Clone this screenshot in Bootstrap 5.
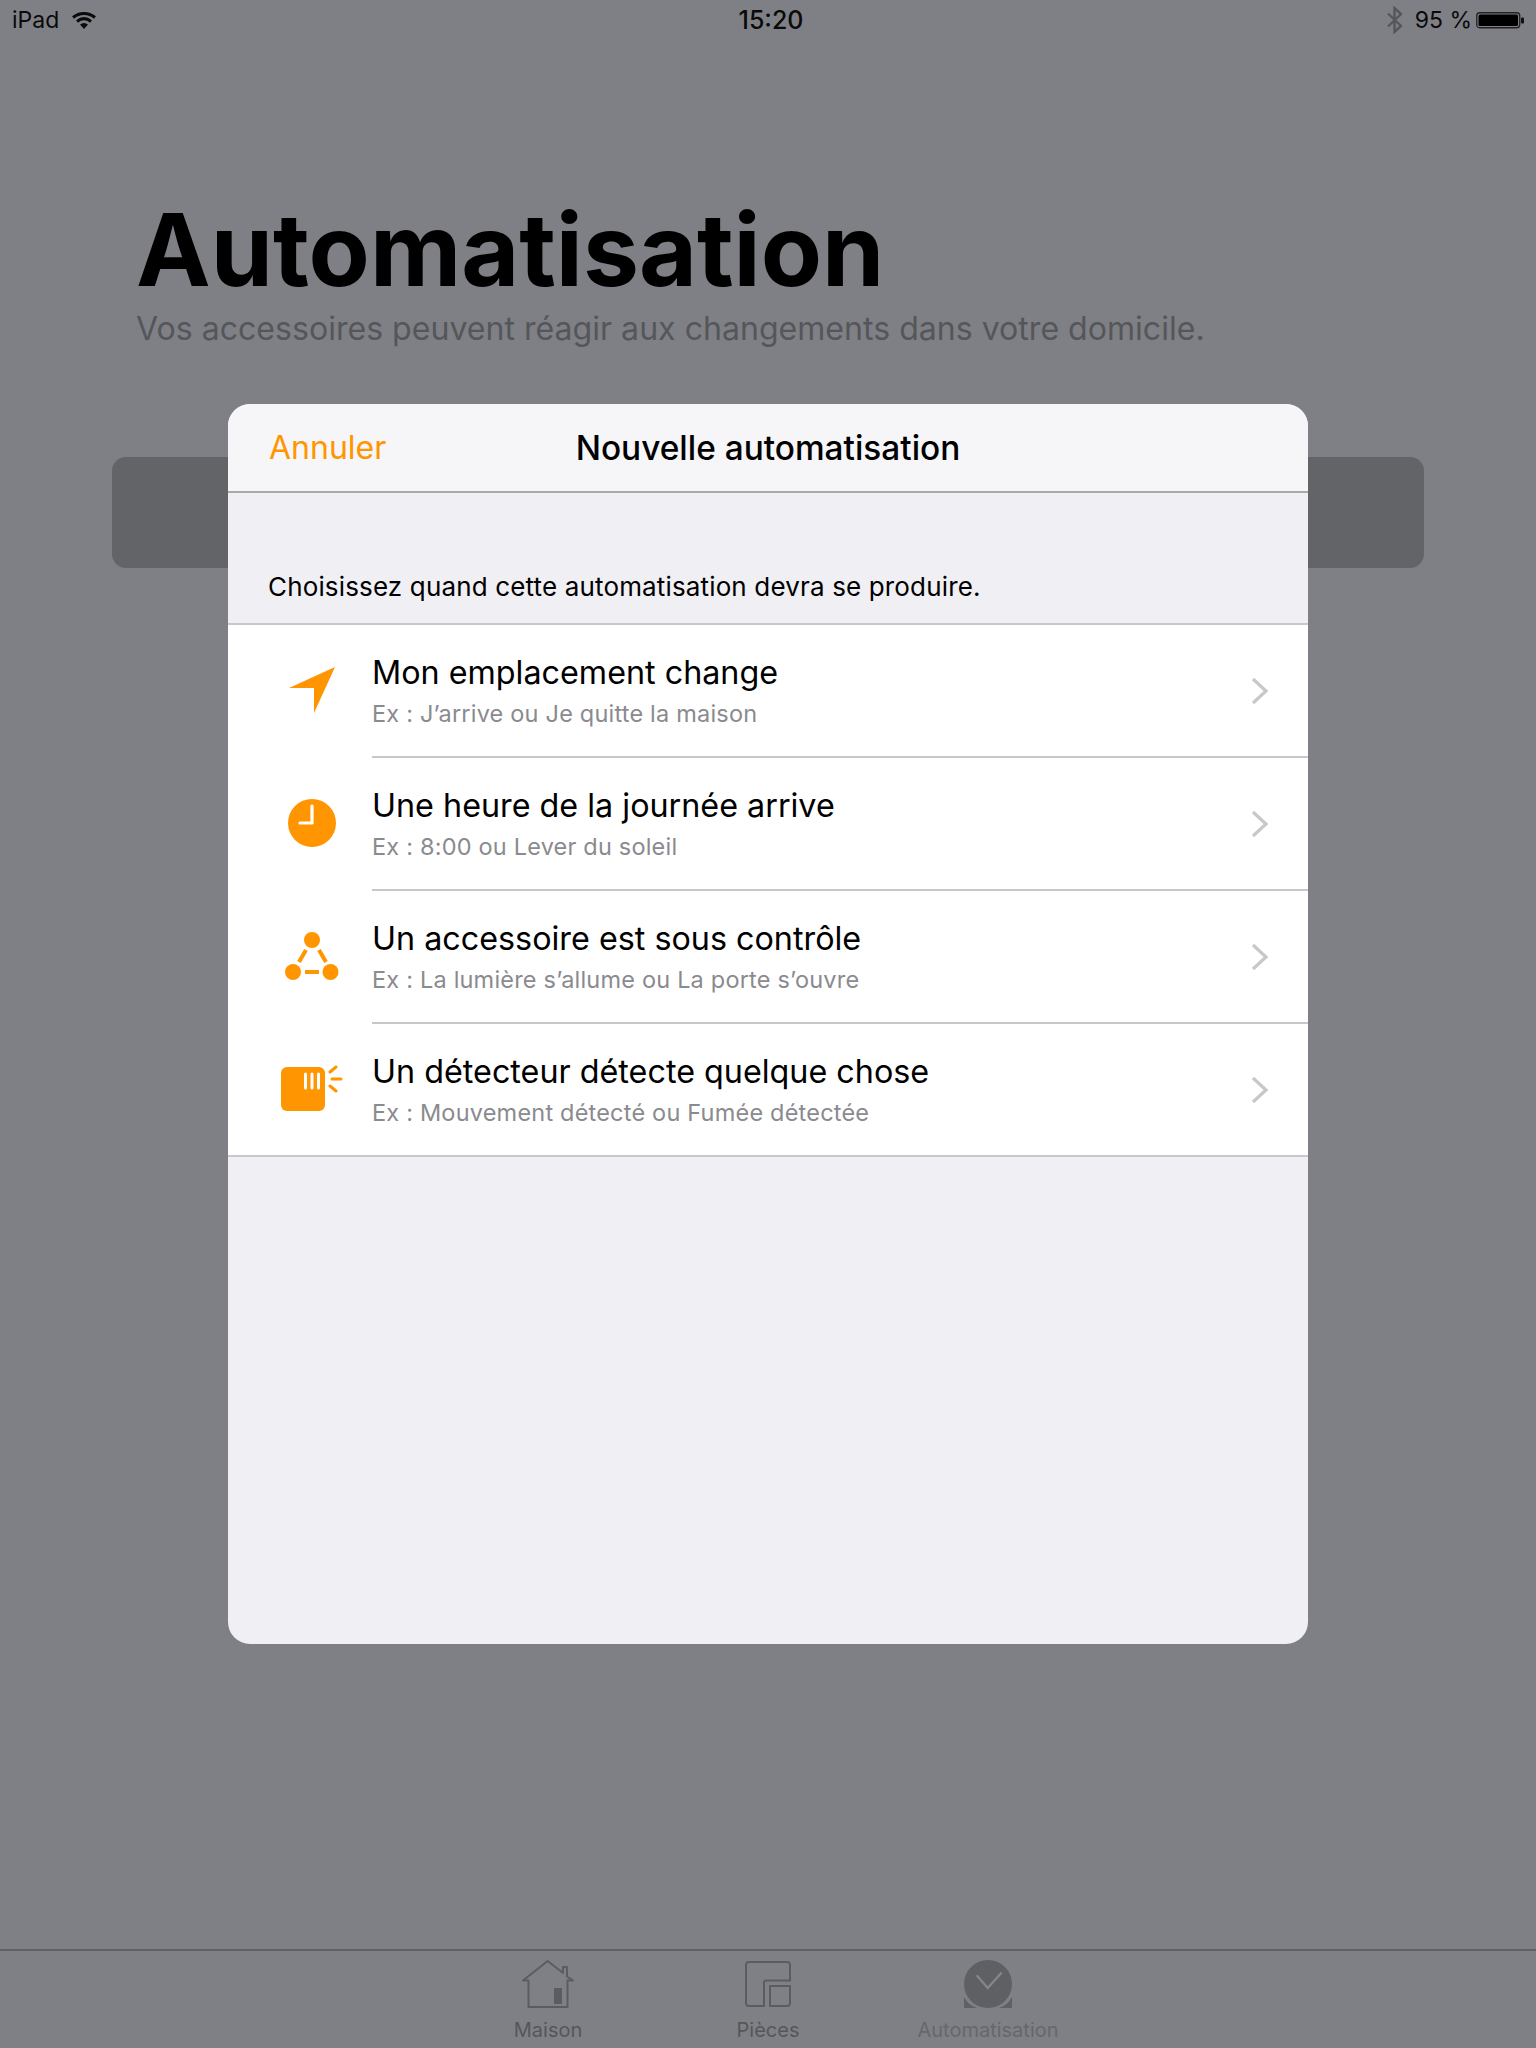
<!DOCTYPE html>
<html lang="fr">
<head>
<meta charset="utf-8">
<title>Automatisation</title>
<link href="https://cdn.jsdelivr.net/npm/bootstrap@5.3.0/dist/css/bootstrap.min.css" rel="stylesheet">
<style>
html,body{margin:0;background:#7f8085}
body{font-family:Inter,"Liberation Sans",sans-serif;color:#000;overflow:hidden}
.screen{width:1536px;height:2048px;background:#7f8085;position:relative}
.statusbar{height:40px;padding:0 12px;font-size:23px;color:#0a0a0a;position:relative}
.statusbar .wifi{margin-left:12px}
.statusbar .bt{margin-right:11px}
.clock{position:absolute;left:6px;right:0;text-align:center;font-weight:500;font-size:25px;top:3px;line-height:34px}
.page-title{font-size:100px;font-weight:700;line-height:1;margin:0;padding:160px 0 0 136px;color:#000}
.page-sub{font-size:32.1px;color:#55565a;padding-left:136px;line-height:40px;margin-top:9px}
.dark-panel{margin:108px 0 0 112px;width:1312px;height:111px;background:#636468;border-radius:14px}
.tabbar{height:99px;border-top:2px solid #5f6064;padding-top:9px;justify-content:center}
.tabitem{width:220px;font-size:20px;line-height:24px;color:#55565a;text-align:center}
.tabitem svg{display:block;margin:0 auto 10px}
.tabitem.dim{color:#66676b}
.sheet{position:absolute;left:228px;top:404px;width:1080px;height:1240px;background:#efeff4;border-radius:22px;overflow:hidden}
.sheet-head{height:89px;background:#f6f6f8;border-bottom:2px solid #a9a9ad;position:relative;font-size:32px;line-height:88px}
.sheet-head .cancel{position:absolute;left:41px;top:0;color:#ff9500}
.sheet-head .ttl{text-align:center;font-weight:500;font-size:33.4px}
.hint{height:132px;padding:0 0 21px 40px;font-size:26px;letter-spacing:.15px;line-height:30px;display:flex;align-items:flex-end;border-bottom:2px solid #c8c7cc}
.rows{background:#fff;border-bottom:2px solid #c8c7cc}
.rowitem{height:133px;position:relative;display:flex;align-items:center}
.rowitem:last-child{height:131px}
.rowitem .ico{width:144px;flex:none;display:flex;justify-content:center;padding-left:24px}
.rowitem .ico svg{margin-left:-1px;margin-top:-3px}
.rowbody{flex:1;height:100%;padding-top:28px;border-bottom:2px solid #c8c7cc}
.rowitem:last-child .rowbody{border-bottom:0}
.r-title{font-size:32.3px;line-height:40px;color:#000}
.r-sub{font-size:23.5px;line-height:30px;color:#8a8a8f;margin-top:6px;letter-spacing:.2px}
.chev{position:absolute;right:39px;top:52px}
</style>
</head>
<body>
<div class="screen d-flex flex-column">
  <div class="statusbar d-flex align-items-center">
    <span>iPad</span>
    <svg class="wifi" width="26" height="20" viewBox="0 0 26 20"><path d="M2 7.500C8.500 2 17.500 2 24 7.500M6 11.500C10.500 7.800 15.500 7.800 20 11.500" fill="none" stroke="#0a0a0a" stroke-width="3"/><path d="M9 14.500C11.500 12.500 14.500 12.500 17 14.500L13 19Z" fill="#0a0a0a"/></svg>
    <div class="clock">15:20</div>
    <div class="ms-auto d-flex align-items-center">
      <svg class="bt" width="18" height="28" viewBox="0 0 18 28"><path d="M2 7.500L15 20 8.500 26V2L15 8 2 20.500" fill="none" stroke="#55565a" stroke-width="2.400"/></svg>
      <span>95 %</span>
      <svg class="ms-1" width="48" height="20" viewBox="0 0 48 20"><rect x=".75" y="2.750" width="43" height="15" rx="3" fill="none" stroke="#222" stroke-width="1.300"/><rect x="2.500" y="4.500" width="39.500" height="11.500" rx="1.500" fill="#000"/><rect x="45" y="7.500" width="3" height="6" rx="1" fill="#111"/></svg>
    </div>
  </div>
  <h1 class="page-title">Automatisation</h1>
  <div class="page-sub">Vos accessoires peuvent réagir aux changements dans votre domicile.</div>
  <div class="dark-panel"></div>
  <div class="tabbar d-flex mt-auto">
    <div class="tabitem">
      <svg width="52" height="48" viewBox="0 0 52 48"><path d="M1 20.500 25.700 1 41 13V7H45V16.500L51 20.500H45.500V47H6.500V20.500Z" fill="none" stroke="#5b5c60" stroke-width="2" stroke-linejoin="round"/><rect x="32" y="28" width="8" height="16" fill="#5b5c60"/></svg>
      Maison
    </div>
    <div class="tabitem">
      <svg width="46" height="48" viewBox="0 -1 46 48"><path d="M19 45H4Q1 45 1 42V4Q1 1 4 1H42Q45 1 45 4V19.500H21Q19 19.500 19 21.500ZM25 45V25H45V42Q45 45 42 45Z" fill="none" stroke="#5b5c60" stroke-width="2"/></svg>
      Pièces
    </div>
    <div class="tabitem dim">
      <svg width="48" height="48" viewBox="0 0 48 48"><path d="M0 48V37Q4 45 13 48ZM48 48V37Q44 45 35 48Z" fill="#5f6064"/><circle cx="24" cy="24" r="24" fill="#5f6064"/><path d="M12.700 15.300 23.700 28 37.700 12.600" fill="none" stroke="#85868a" stroke-width="2.200"/></svg>
      Automatisation
    </div>
  </div>

  <div class="sheet">
    <div class="sheet-head">
      <div class="cancel">Annuler</div>
      <div class="ttl">Nouvelle automatisation</div>
    </div>
    <div class="hint">Choisissez quand cette automatisation devra se produire.</div>
    <div class="rows">
      <div class="rowitem">
        <div class="ico"><svg width="46" height="46" viewBox="0 0 46 46"><path d="M0 21 46 0 25 46V21Z" fill="#ff9500"/></svg></div>
        <div class="rowbody"><div class="r-title">Mon emplacement change</div><div class="r-sub">Ex : J’arrive ou Je quitte la maison</div></div>
        <svg class="chev" width="18" height="28" viewBox="0 0 18 28"><path d="M2 2 15 14 2 26" fill="none" stroke="#c7c7cc" stroke-width="3.200"/></svg>
      </div>
      <div class="rowitem">
        <div class="ico"><svg width="48" height="48" viewBox="0 0 48 48"><circle cx="24" cy="24" r="24" fill="#ff9500"/><path d="M24 7V24H12" fill="none" stroke="#fff" stroke-width="3.200" stroke-linecap="round" stroke-linejoin="round"/></svg></div>
        <div class="rowbody"><div class="r-title">Une heure de la journée arrive</div><div class="r-sub">Ex : 8:00 ou Lever du soleil</div></div>
        <svg class="chev" width="18" height="28" viewBox="0 0 18 28"><path d="M2 2 15 14 2 26" fill="none" stroke="#c7c7cc" stroke-width="3.200"/></svg>
      </div>
      <div class="rowitem">
        <div class="ico"><svg width="54" height="48" viewBox="0 0 54 48"><circle cx="27" cy="8" r="8" fill="#ff9500"/><circle cx="8" cy="40" r="8" fill="#ff9500"/><circle cx="45.500" cy="40" r="8" fill="#ff9500"/><path d="M21 18 14 30M34 18 41 30M20 40H34" fill="none" stroke="#ff9500" stroke-width="4"/></svg></div>
        <div class="rowbody"><div class="r-title">Un accessoire est sous contrôle</div><div class="r-sub">Ex : La lumière s’allume ou La porte s’ouvre</div></div>
        <svg class="chev" width="18" height="28" viewBox="0 0 18 28"><path d="M2 2 15 14 2 26" fill="none" stroke="#c7c7cc" stroke-width="3.200"/></svg>
      </div>
      <div class="rowitem">
        <div class="ico"><svg width="62" height="46" viewBox="0 0 62 46"><rect x="0" y="2" width="44" height="44" rx="6" fill="#ff9500"/><path d="M24.500 9V23M31 9V23M37.500 9V23" stroke="#fff" stroke-width="3" stroke-linecap="round"/><path d="M49 7 55 2M51 14H60M49 21 55 26" stroke="#ff9500" stroke-width="3" stroke-linecap="round"/></svg></div>
        <div class="rowbody"><div class="r-title">Un détecteur détecte quelque chose</div><div class="r-sub">Ex : Mouvement détecté ou Fumée détectée</div></div>
        <svg class="chev" width="18" height="28" viewBox="0 0 18 28"><path d="M2 2 15 14 2 26" fill="none" stroke="#c7c7cc" stroke-width="3.200"/></svg>
      </div>
    </div>
  </div>
</div>
<script src="https://cdn.jsdelivr.net/npm/bootstrap@5.3.0/dist/js/bootstrap.bundle.min.js"></script>
</body>
</html>
